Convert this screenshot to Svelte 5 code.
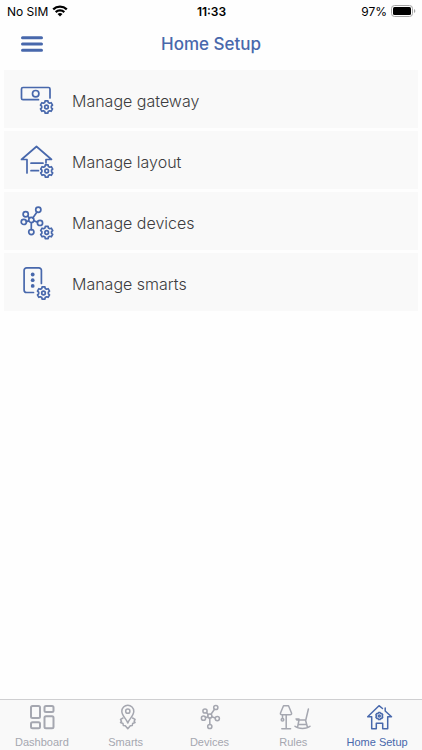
<script>
  let active = "Home Setup";

  const rows = [
    { id: "gateway", label: "Manage gateway", gear: [26.5, 25] },
    { id: "layout", label: "Manage layout", gear: [26.7, 28] },
    { id: "devices", label: "Manage devices", gear: [26.7, 28.5] },
    { id: "smarts", label: "Manage smarts", gear: [23.5, 28] }
  ];

  const tabs = ["Dashboard", "Smarts", "Devices", "Rules", "Home Setup"];

  // six teeth around the origin
  function gearPath(outer, inner) {
    let d = "";
    for (let i = 0; i < 6; i++) {
      const pts = [
        [inner, -20],
        [outer, -13],
        [outer, 13],
        [inner, 20]
      ];
      for (const [r, offset] of pts) {
        const a = ((i * 60 + 30 + offset) * Math.PI) / 180;
        const x = (r * Math.cos(a)).toFixed(2);
        const y = (r * Math.sin(a)).toFixed(2);
        d += (d ? "L" : "M") + x + " " + y;
      }
    }
    return d + "Z";
  }

  const gear = gearPath(6.3, 4.9);
  const smallGear = gearPath(3.6, 3);
</script>

<div class="screen">
  <div class="status">
    <div class="carrier">
      <span>No SIM</span>
      <svg width="16" height="12" viewBox="0 0 16 12" aria-hidden="true">
        <path d="M1.2 4.4a9.8 9.8 0 0 1 13.6 0M3.7 7.1a6.2 6.2 0 0 1 8.6 0" fill="none" stroke="#000" stroke-width="2.2" />
        <path d="M8 11.6 5.5 9.1a3.6 3.6 0 0 1 5 0Z" />
      </svg>
    </div>
    <strong>11:33</strong>
    <div class="battery">
      <span>97%</span>
      <svg width="25" height="12" viewBox="0 0 25 12" aria-hidden="true">
        <rect x="0.5" y="0.5" width="21" height="11" rx="3" fill="none" stroke="#a5a5a5" />
        <rect x="2" y="2" width="18" height="8" rx="1.5" />
        <path d="M23 4v4c1.8-.6 1.8-3.4 0-4Z" fill="#a5a5a5" />
      </svg>
    </div>
  </div>

  <header>
    <button class="menu" type="button" aria-label="Menu">
      <svg width="22" height="16" viewBox="0 0 22 16">
        <path d="M1.5 1.7h19M1.5 8h19M1.5 14.2h19" />
      </svg>
    </button>
    <h1>Home Setup</h1>
  </header>

  <main>
    {#each rows as row}
      <button class="row" type="button">
        <svg width="36" height="36" viewBox="0 0 36 36" aria-hidden="true">
          {#if row.id === "gateway"}
            <path d="M18.5 17.7H3a1.5 1.5 0 0 1-1.5-1.5V7A1.5 1.5 0 0 1 3 5.5h25.5A1.5 1.5 0 0 1 30 7v9" />
            <circle cx="15.7" cy="11.7" r="3.2" />
          {:else if row.id === "layout"}
            <path d="M7 30V16.5H1.5l15-13 15 13H26v3.5M11 20.2h12M11 27.7h7.5" />
          {:else if row.id === "devices"}
            <path d="m12.8 14 4-5.8M7.8 12.1l1.5 2M6.3 17.6l2.3-.7M13.8 16.8l3.6 1.3M11.3 18.8v7" />
            <circle cx="18.3" cy="5.7" r="2.6" />
            <circle cx="5.7" cy="10.2" r="2.6" />
            <circle cx="3.8" cy="17.9" r="2.6" />
            <circle cx="11.3" cy="15.9" r="2.6" />
            <circle cx="20" cy="18.9" r="2.6" />
            <circle cx="11.3" cy="28.1" r="2.6" />
          {:else}
            <path d="M13.5 27.5H6.6A2.5 2.5 0 0 1 4.1 25V5.3a2.5 2.5 0 0 1 2.5-2.5h12.3a2.5 2.5 0 0 1 2.5 2.5v13.2" />
            <g class="dots">
              <circle cx="12.7" cy="9.5" r="1.9" />
              <circle cx="12.7" cy="15.2" r="1.9" />
              <circle cx="12.7" cy="20.9" r="1.9" />
            </g>
          {/if}
          <g transform="translate({row.gear[0]} {row.gear[1]})">
            <path d={gear} />
            <circle r="1.8" />
          </g>
        </svg>
        <span>{row.label}</span>
      </button>
    {/each}
  </main>

  <nav>
    {#each tabs as tab}
      <button
        type="button"
        class="tab"
        class:active={tab === active}
        aria-current={tab === active ? "page" : undefined}
        on:click={() => (active = tab)}>
        <svg width="36" height="28" viewBox="0 0 36 28" aria-hidden="true">
          {#if tab === "Dashboard"}
            <g class="tiles">
              <rect x="7" y="3" width="9" height="12" rx="1.5" />
              <rect x="7" y="19.2" width="9" height="6" rx="1.5" />
              <rect x="20.5" y="3" width="9" height="6" rx="1.5" />
              <rect x="20.5" y="13.2" width="9" height="12" rx="1.5" />
            </g>
          {:else if tab === "Smarts"}
            <path d="M19.8 20c-1.4-4.3-6-7.2-6-11.8a6 6 0 0 1 12 0c0 4.600-4.600 7.500-6 11.800Z" />
            <circle cx="19.8" cy="8.200" r="2.100" />
            <path d="m15 15-2.500 1.300 1 2-1 1.200 2.500 1 .3 2 2 .2 2.500 3 2.500-3 2-.2.3-2 2.500-1-1-1.200 1-2-2.500-1.300" />
          {:else if tab === "Devices"}
            <path d="m20 11.200 3.500-5M15.500 9.500l1.900 2.200M14.400 14.600l2.500-.9M20.700 13.700l3.700 1.300M18.800 15v6.500" />
            <circle cx="24.800" cy="4.500" r="2.100" />
            <circle cx="14" cy="8" r="2.100" />
            <circle cx="12.500" cy="15.200" r="2.100" />
            <circle cx="18.800" cy="13" r="2.100" />
            <circle cx="26.300" cy="15.600" r="2.100" />
            <circle cx="18.800" cy="23.500" r="2.100" />
          {:else if tab === "Rules"}
            <path d="M8.500 2.700h5l3 7.300q.5 1.800-1.500 1.800H7Q5 11.800 5.500 10ZM11.200 12v13M6.800 25.700h8.800M7.500 12v3.500" />
            <circle cx="7.500" cy="16.700" r="1.300" />
            <path d="m33.400 6-2.600 11h-9M21 16h3M24 17l-1.500 7.500M30.500 17l2 7.500M23.500 21.500h8M20 23.300q2.500 2.300 7.500 2.300t7.500-2.300" />
          {:else}
            <path d="M23.500 5.500 20 2.700 8.700 13.800h4v11.900h4.600v-5.400h6.400v5.400h5V13.800h3.800L26.200 8V5" />
            <g transform="translate(20.300 13)">
              <path d={smallGear} />
              <circle r="1" />
            </g>
          {/if}
        </svg>
        <span>{tab}</span>
      </button>
    {/each}
  </nav>
</div>

<style>
  :global(body) {
    margin: 0;
    background: #fefefe;
  }
  * {
    box-sizing: border-box;
  }
  .screen {
    display: flex;
    flex-direction: column;
    min-height: 100vh;
    font-family: Inter, "Liberation Sans", sans-serif;
  }
  button {
    border: 0;
    background: none;
    padding: 0;
    cursor: pointer;
  }
  svg {
    flex: none;
    display: block;
  }
  .status {
    display: grid;
    grid-template-columns: 1fr auto 1fr;
    align-items: center;
    height: 22px;
    padding: 0 6px 0 7px;
    font-size: 12px;
    color: #000;
  }
  .status strong {
    font-weight: 600;
  }
  .carrier,
  .battery {
    display: flex;
    align-items: center;
    gap: 4px;
  }
  .battery {
    justify-content: flex-end;
  }
  header {
    display: grid;
    grid-template-columns: 22px 1fr 22px;
    align-items: center;
    height: 44px;
    padding: 0 21px;
  }
  .menu svg {
    fill: none;
    stroke: #4868ac;
    stroke-width: 3;
    stroke-linecap: round;
  }
  h1 {
    margin: 0;
    text-align: center;
    font-size: 17px;
    font-weight: 500;
    color: #4868ac;
  }
  main {
    flex: 1;
    display: flex;
    flex-direction: column;
    gap: 3px;
    padding: 4px;
  }
  .row {
    display: flex;
    align-items: center;
    gap: 16px;
    height: 58px;
    padding: 2px 16px 0;
    background: #f9f9f9;
    font: 300 16px Inter, "Liberation Sans", sans-serif;
    color: #3c3c40;
    text-align: left;
  }
  .row span {
    padding-top: 2px;
  }
  .row svg {
    fill: none;
    stroke: #4868ac;
    stroke-width: 1.7;
    stroke-linecap: round;
    stroke-linejoin: round;
  }
  .row .dots {
    fill: #4868ac;
    stroke: none;
  }
  nav {
    display: flex;
    height: 51px;
    padding: 3px 3px 0 0;
    border-top: 1px solid #cfcfd1;
    background: #f9f9f9;
  }
  .tab {
    flex: 1 1 0;
    display: flex;
    flex-direction: column;
    align-items: center;
    gap: 4px;
    font: 11px/14px "Liberation Sans", Arial, sans-serif;
    color: #a5a7b0;
  }
  .tab svg {
    fill: none;
    stroke: currentColor;
    stroke-width: 1.5;
    stroke-linecap: round;
    stroke-linejoin: round;
  }
  .tab .tiles {
    stroke-width: 2;
  }
  .tab.active {
    color: #4868ac;
  }
</style>
